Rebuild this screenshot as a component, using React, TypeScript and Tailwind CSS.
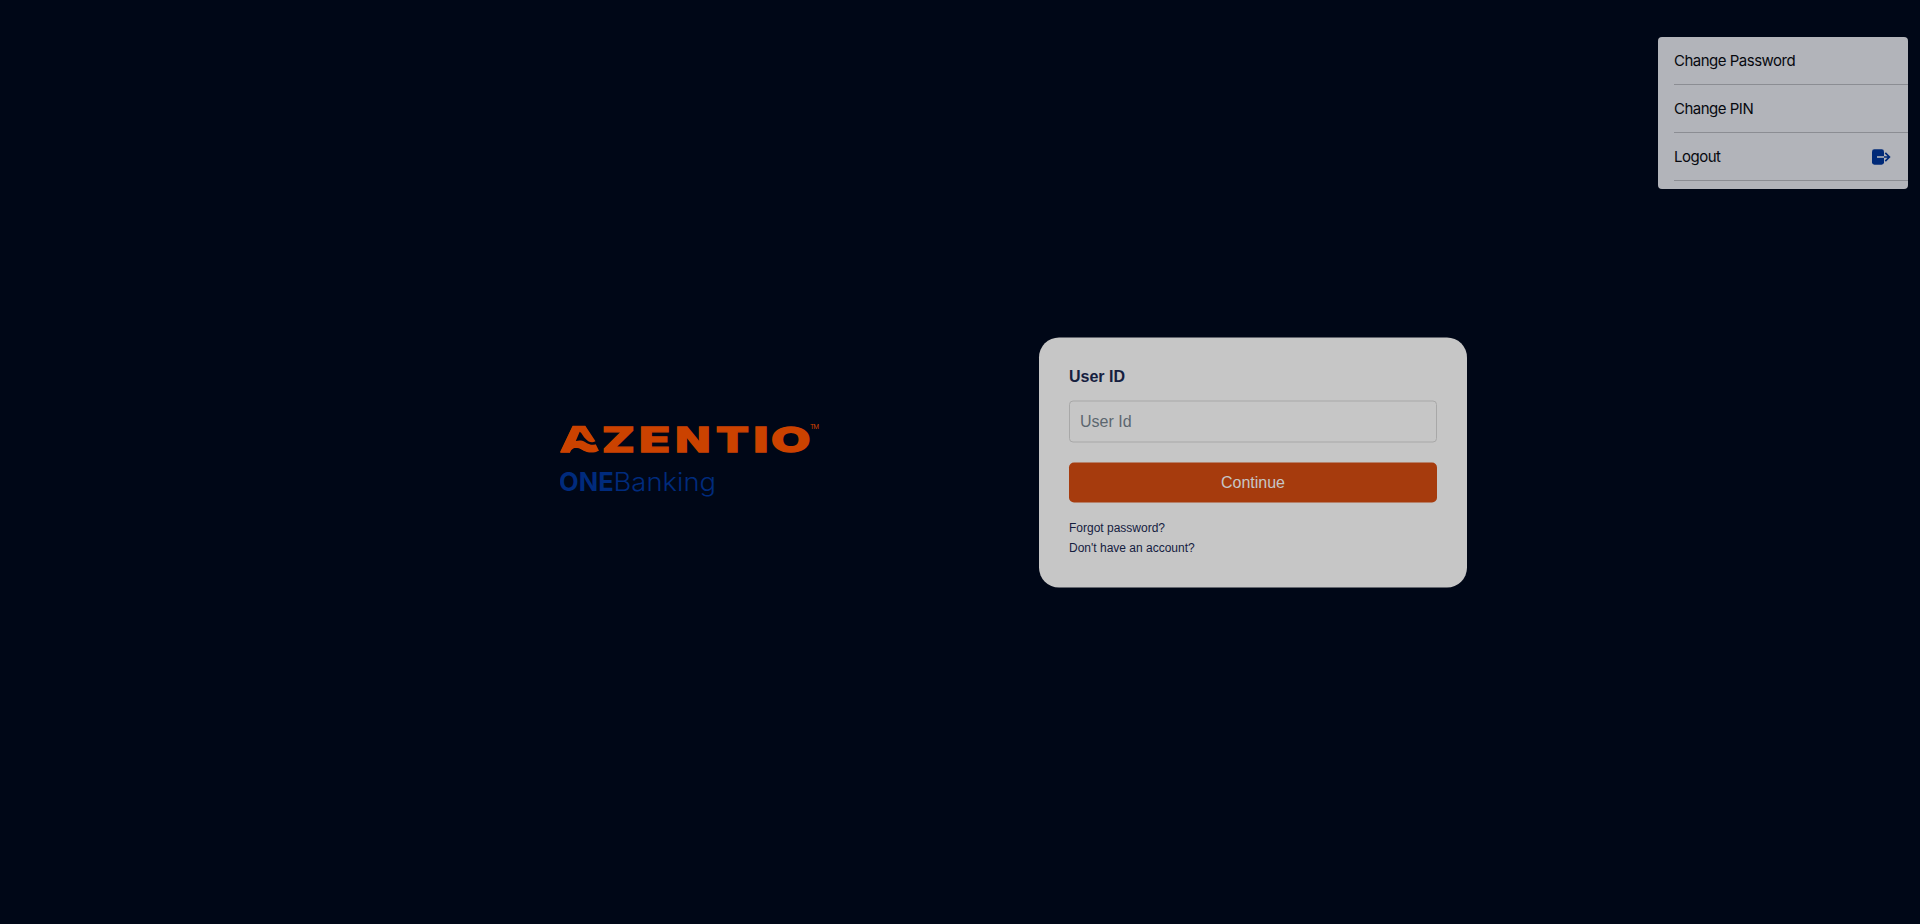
import React from "react";

type Glyph = { char: string; x: number; scale: number };

const letters: Glyph[] = [
  { char: "A", x: 0.2, scale: 1.4 },
  { char: "Z", x: 42, scale: 1.4 },
  { char: "E", x: 79, scale: 1.48 },
  { char: "N", x: 115.2, scale: 1.33 },
  { char: "T", x: 156, scale: 1.41 },
  { char: "I", x: 193.2, scale: 1.55 },
  { char: "O", x: 211, scale: 1.48 },
];

function Logo() {
  return (
    <svg width="274" height="110" viewBox="0 -20 274 110" aria-label="Azentio ONEBanking">
      <g fill="#cb4200" fontFamily="Inter, sans-serif" fontWeight="800" fontSize="34.5">
        <g stroke="#cb4200" strokeWidth="1.4">
          {letters.map((l) => (
            <text key={l.char} transform={`translate(${l.x} 31.7) scale(${l.scale} 1)`}>
              {l.char}
            </text>
          ))}
        </g>
        <text x="250" y="9" fontSize="6.5" fontWeight="400" textLength="9">
          TM
        </text>
      </g>
      {/* Wave emblem on the first letter */}
      <path d="M0 32.2L12.7 5.7H25.3L36 22V24.7L39 30.7C33 34 27 32.6 23.3 30.7C19 28 13 25.5 10 32.2Z" fill="#cb4200" />
      <path d="M19.7 11.7C22 13 23 16.5 26 19.3C29 22.5 32 23.4 36 21L37.5 24.1C32 25.8 29 24.4 25 21.9C22 20.2 19 20 15.8 21Z" fill="#000717" />
      <path d="M10 34V32.4C13 25.5 19 28 23.3 30.7C27 32.8 34 33.6 39 30.7L42 34Z" fill="#000717" />
      <g fill="#002b7d" fontSize="25.5" fontFamily="Inter, sans-serif">
        <text x="-0.9" y="71" fontWeight="700" textLength="54.5" lengthAdjust="spacingAndGlyphs">
          ONE
        </text>
        <text x="53.6" y="71" fontWeight="300" textLength="102.4" lengthAdjust="spacingAndGlyphs">
          Banking
        </text>
      </g>
    </svg>
  );
}

function LogoutIcon() {
  return (
    <svg width="19" height="16" viewBox="0 0 19 16" fill="none">
      <rect x="0" y="0.3" width="12" height="15.4" rx="2.4" fill="#002a78" />
      <path d="M5 8H12" stroke="#b2b4ba" strokeWidth="1.6" />
      <path d="M12 8H17M13.3 3.9L17.4 8L13.3 12.1" stroke="#002a78" strokeWidth="1.7" />
    </svg>
  );
}

function AccountMenu() {
  return (
    <nav className="absolute top-[37px] right-3 h-[152px] w-[250px] rounded bg-[#b2b4ba] pl-4 font-[Inter,sans-serif] text-[15px] tracking-[-0.5px] text-[#07090f]">
      {["Change Password", "Change PIN", "Logout"].map((item) => (
        <a key={item} className="flex h-12 items-center justify-between border-b border-[#8b8d93] pr-[17px]">
          <span className="pt-0.5">{item}</span>
          {item === "Logout" && <LogoutIcon />}
        </a>
      ))}
    </nav>
  );
}

export default function App() {
  return (
    <main className="relative flex h-[924px] items-start overflow-hidden bg-[#000717] pt-[338px] pl-[560px] font-['Liberation_Sans',Arial,sans-serif]">
      <div className="mr-[205px] pt-[62px]">
        <Logo />
      </div>
      <form className="flex h-[250px] w-[428px] -translate-y-[0.5px] flex-col rounded-[20px] bg-[#c6c6c6] px-[30px] pt-[27px] text-[#15203f]">
        <label htmlFor="user" className="mb-3 text-base leading-6 font-bold">
          User ID
        </label>
        <input
          id="user"
          placeholder="User Id"
          className="h-[42px] rounded-[4px] border border-[#a8a8a8] bg-transparent px-[10px] text-base placeholder:text-[#5c666f]"
        />
        <button type="button" className="mt-5 h-10 rounded-[5px] bg-[#a63b0d] text-base text-[#c6c6c6]">
          Continue
        </button>
        <a className="mt-[15px] text-xs leading-5">Forgot password?</a>
        <a className="text-xs leading-5">Don't have an account?</a>
      </form>
      <AccountMenu />
    </main>
  );
}
